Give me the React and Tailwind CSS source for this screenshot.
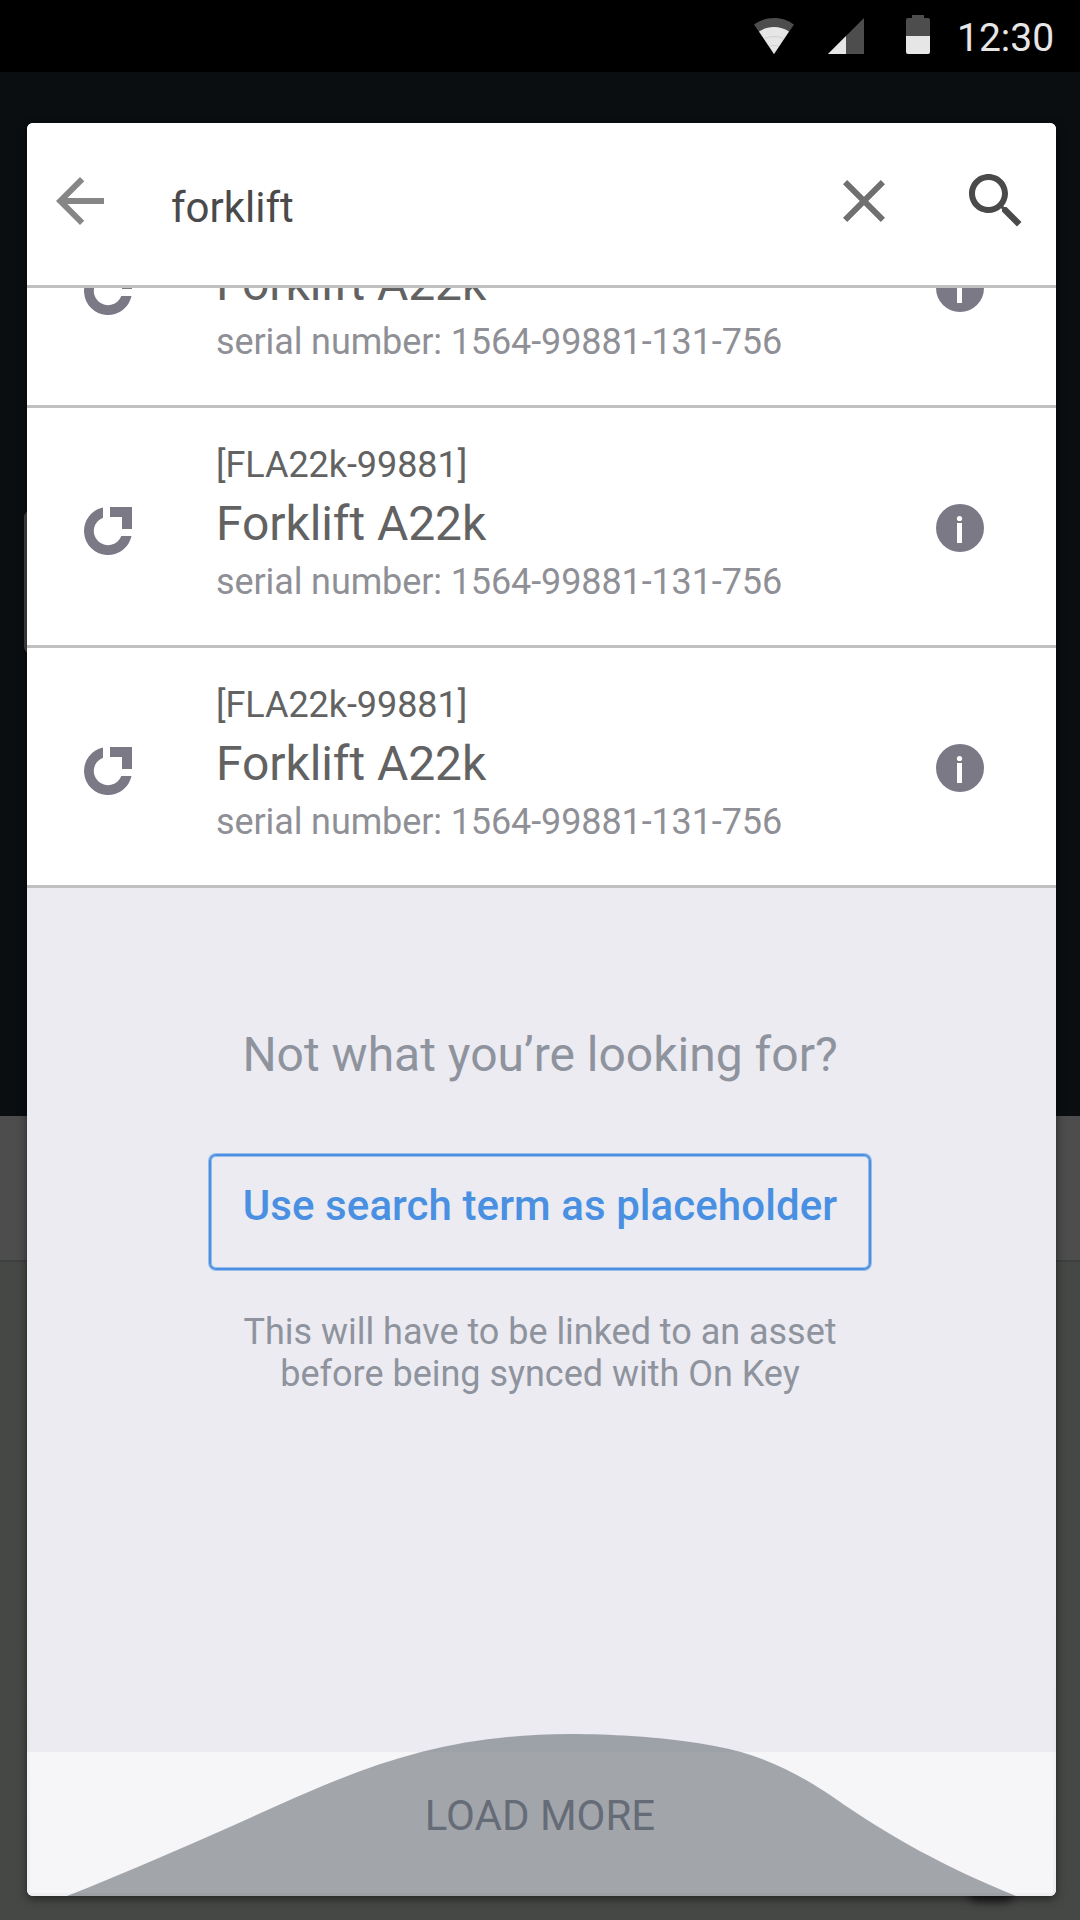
const code = "[FLA22k-99881]";
const name = "Forklift A22k";
const serial = "serial number: 1564-99881-131-756";

// The first row is scrolled under the header, so its code line is left blank.
const rows = [
  { id: 1, code: "", name, serial },
  { id: 2, code, name, serial },
  { id: 3, code, name, serial },
];

function StatusBar() {
  return (
    <div className="flex h-[72px] shrink-0 items-start bg-black pl-[754px] pt-[15px]">
      <svg className="mt-[3px] h-9 w-10" viewBox="0 0 40 36">
        <path d="M20 36L0 6.600C5.500 2.500 12 0 20 0s14.500 2.500 20 6.600z" fill="#4d4d4d" />
        <path d="M20 36L5 13.600C9.500 10.500 14.500 9 20 9s10.500 1.500 15 4.600z" fill="#e6e6e6" />
        <path d="M11 20.500q3-2 9-2t9 2M15.500 28.500q1.500-1 4.500-1t4.500 1" stroke="#c4c4c4" strokeWidth="0.7" fill="none" />
      </svg>
      <svg className="ml-[34px] mt-[3px] h-9 w-9" viewBox="0 0 36 36">
        <path d="M36 0v36H0z" fill="#4d4d4d" />
        <path d="M18 18v18H0z" fill="#e6e6e6" />
      </svg>
      <svg className="ml-[42px] h-[39px] w-6" viewBox="0 0 24 39">
        <path d="M6 0h12v3h4a2 2 0 0 1 2 2v16H0V5a2 2 0 0 1 2-2h4z" fill="#4d4d4d" />
        <path d="M0 21h24v16a2 2 0 0 1-2 2H2a2 2 0 0 1-2-2z" fill="#e6e6e6" />
      </svg>
      <div className="ml-[27px] text-[39px] leading-[46px] text-[#e6e6e6]">12:30</div>
    </div>
  );
}

function SearchHeader() {
  return (
    <div className="flex h-[165px] shrink-0 items-start border-b-[3px] border-[#c0c0c0] bg-white pl-[17px] pt-[42px]">
      <svg className="size-[72px]" viewBox="0 0 24 24" fill="#868686">
        <path d="M20 11H7.830l5.590-5.590L12 4l-8 8 8 8 1.410-1.410L7.830 13H20z" />
      </svg>
      <div className="ml-[55px] mt-[18px] w-[657px] text-[42px] leading-[50px] text-[#4a4a4a]">forklift</div>
      <svg className="size-[72px]" viewBox="0 0 24 24" fill="#707070">
        <path d="M19 6.410L17.590 5 12 10.590 6.410 5 5 6.410 10.590 12 5 17.590 6.410 19 12 13.410 17.590 19 19 17.590 13.410 12z" />
      </svg>
      <svg className="ml-[60px] size-[72px]" viewBox="0 0 24 24" fill="#4a4a4a">
        <path d="M15.500 14h-.79l-.28-.27C15.410 12.590 16 11.110 16 9.500 16 5.910 13.090 3 9.500 3S3 5.910 3 9.500 5.910 16 9.500 16c1.610 0 3.090-.59 4.230-1.570l.27.28v.79l5 4.990L20.490 19l-4.990-5zm-6 0C7.010 14 5 11.990 5 9.500S7.010 5 9.500 5 14 7.010 14 9.500 11.990 14 9.500 14z" />
      </svg>
    </div>
  );
}

function ResultRow({ item }) {
  return (
    <div className="flex h-60 shrink-0 items-start border-b-[3px] border-[#c0c0c0] bg-white pl-[57px]">
      <svg className="mt-[99px] size-12" viewBox="0 0 48 48" fill="#7b7985">
        <path d="M19 .5A24 24 0 1 0 47.500 29H37.300A14.200 14.200 0 1 1 19 10.700z" />
        <path d="M26 0h22v22H38V10H26z" />
      </svg>
      <div className="ml-[84px] w-[720px] pt-[33px]">
        <div className="h-12 text-[36px] leading-[48px] tracking-[-0.06px] text-[#626262]">{item.code}</div>
        <div className="text-[48px] leading-[69px] tracking-[-0.08px] text-[#626262]">{item.name}</div>
        <div className="text-[36px] leading-[48px] tracking-[-0.11px] text-[#8f8f96]">{item.serial}</div>
      </div>
      <svg className="mt-24 size-12" viewBox="0 0 48 48">
        <circle cx="24" cy="24" r="24" fill="#7b7985" />
        <circle cx="23.500" cy="14.500" r="2.600" fill="#fff" />
        <path d="M21 19h5v20h-5z" fill="#fff" />
      </svg>
    </div>
  );
}

function PlaceholderPanel() {
  return (
    <div className="flex h-[864px] shrink-0 flex-col items-center bg-[#ebebf1] pr-[3px] pt-[139px] text-center text-[#8e939d]">
      <div className="text-[48px] leading-[56px]">Not what you’re looking for?</div>
      <button className="mt-[71px] h-[116px] w-[662px] whitespace-nowrap rounded-[7px] border-2 border-[#4a90e2] pb-[13px] text-[42px] font-medium leading-[50px] tracking-[0.07px] text-[#4a90e2] shadow-[0_0_0_1px_#4a90e280,inset_0_0_0_1px_#4a90e280]">
        Use search term as placeholder
      </button>
      <div className="mt-[41px] text-[36px] leading-[42px] tracking-[-0.02px]">
        This will have to be linked to an asset
        <br />
        before being synced with On Key
      </div>
    </div>
  );
}

function LoadMore() {
  return (
    <div className="relative h-36 shrink-0 bg-[#f6f6f9]">
      <svg className="absolute bottom-0 left-0 h-[163px] w-[1029px]" viewBox="27 1733 1029 163">
        <path
          d="M67 1896C145 1865 225 1829 296 1797.300C340 1778 380 1762.500 422 1751.700C470 1739.500 520 1734 571 1734C610 1734 655 1737 684.600 1741.300C704 1743.800 723 1747.200 740 1751.700C775 1761.500 805 1778 833 1797C890 1837 945 1867 1016 1896z"
          fill="#61676e"
          fillOpacity="0.56"
        />
      </svg>
      <div className="relative flex h-full items-center justify-center pb-[16px] pr-[3px] text-[42px] leading-[50px] text-[#666c77]">
        LOAD MORE
      </div>
    </div>
  );
}

export default function App() {
  return (
    <div className="relative flex h-[1920px] w-[1080px] flex-col overflow-hidden font-['Roboto',sans-serif]">
      <StatusBar />
      <div className="h-[1044px] shrink-0 bg-[#0a0e11]" />
      <div className="h-36 shrink-0 bg-[#4d4d4d]" />
      <div className="h-[660px] shrink-0 border-t-2 border-[#3e403f] bg-[#464846]" />
      <div className="absolute left-[24px] top-[511px] h-[142px] w-12 rounded-md bg-[#444444]" />
      <div className="absolute left-[968px] top-[1882px] h-[20px] w-[46px] rounded-full bg-[#1c1c1c] blur-[4px]" />
      <div className="absolute left-[27px] top-[123px] flex h-[1773px] w-[1029px] flex-col overflow-hidden rounded-[6px] bg-white shadow-[0_3px_10px_rgba(0,0,0,0.5)]">
        <SearchHeader />
        <div className="flex h-[600px] shrink-0 flex-col justify-end overflow-hidden">
          {rows.map((item) => (
            <ResultRow key={item.id} item={item} />
          ))}
        </div>
        <PlaceholderPanel />
        <LoadMore />
        {/* faint bevel along the lower edges of the card */}
        <div className="absolute bottom-0 left-0 h-80 w-[3px] bg-linear-to-b from-transparent to-black/3" />
        <div className="absolute bottom-0 right-0 h-80 w-[3px] bg-linear-to-b from-transparent to-black/3" />
        <div className="absolute bottom-0 left-[3px] right-[3px] h-[3px] bg-black/3" />
      </div>
    </div>
  );
}
